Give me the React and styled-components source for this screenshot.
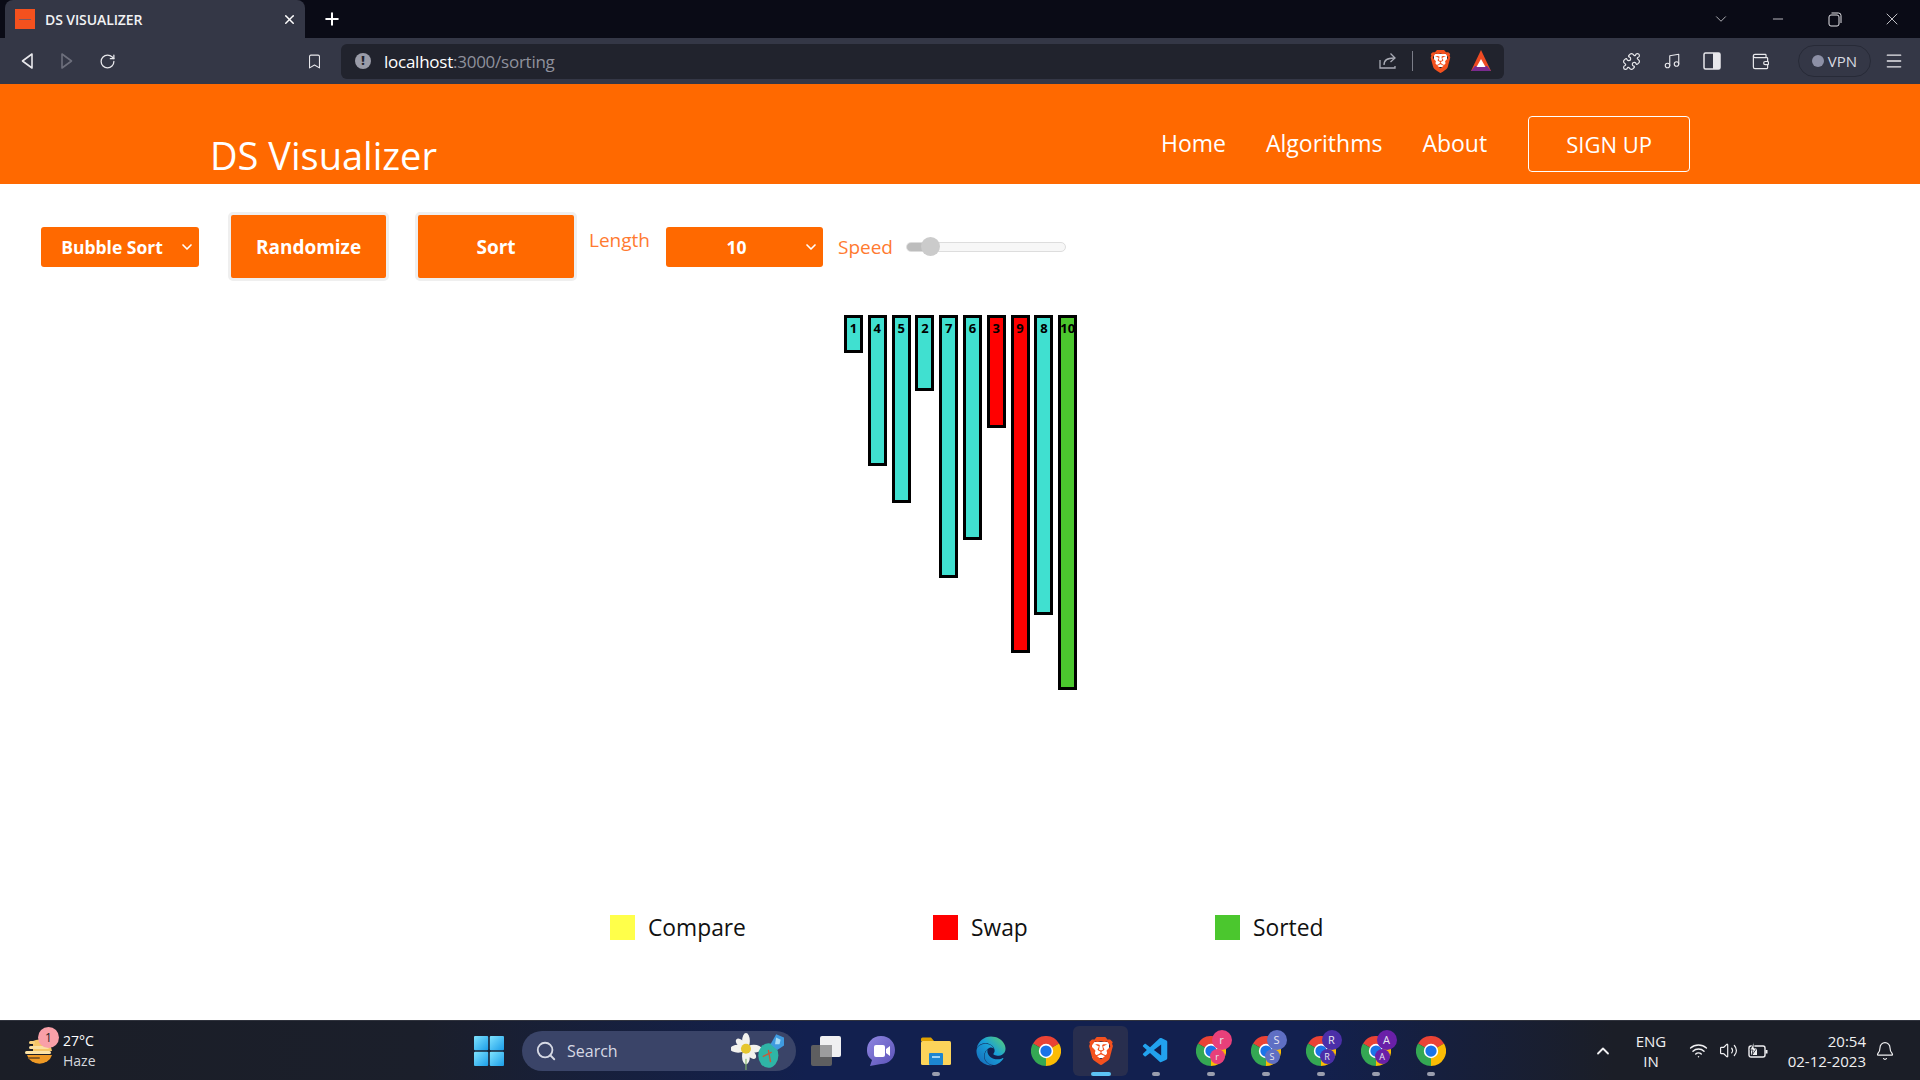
import styled, { createGlobalStyle } from 'styled-components';
import {
  Bell, Bookmark, ChevronDown, ChevronUp, Menu, Minus, Music, Plus,
  Puzzle, RotateCw, Search, Volume2, Wallet, Wifi, X,
} from 'lucide-react';
import { SiBrave } from 'react-icons/si';
import { FaEdge } from 'react-icons/fa';
import { VscVscode } from 'react-icons/vsc';

const ORANGE = '#ff6900';

const GlobalStyle = createGlobalStyle`
  html, body { margin: 0; padding: 0; background: #fff; }
  * { box-sizing: border-box; }
  body { font-family: "Open Sans", "Noto Sans", sans-serif; }
`;

const Screen = styled.div`
  width: 1920px;
  height: 1080px;
  display: flex;
  flex-direction: column;
  overflow: hidden;
`;

/* browser chrome */
const TabStrip = styled.div`
  height: 38px;
  background: #0a0b16;
  display: flex;
  align-items: center;
  color: #fff;
`;

const Tab = styled.div`
  width: 300px;
  height: 38px;
  margin-left: 5px;
  background: #343746;
  border-radius: 8px 8px 0 0;
  display: flex;
  align-items: center;
  padding: 0 8px 0 10px;
`;

const Favicon = styled.div`
  width: 20px;
  height: 20px;
  background: #f4511e;
  display: flex;
  align-items: center;
  justify-content: center;
  &::after {
    content: "";
    width: 12px;
    height: 1px;
    background: #7a5a60;
  }
`;

const TabTitle = styled.span`
  flex: 1;
  margin-left: 10px;
  font-size: 14px;
  font-weight: 600;
  letter-spacing: -0.1px;
  color: #f2f2f4;
`;

const NewTab = styled.div`
  margin-left: 17px;
  display: flex;
`;

const WindowControls = styled.div`
  margin-left: auto;
  display: flex;
  align-items: center;
`;

const WindowButton = styled.div`
  width: 57px;
  display: flex;
  justify-content: center;
  color: #e4e4e8;
`;

const Toolbar = styled.div`
  height: 46px;
  background: #343746;
  display: flex;
  align-items: center;
  color: #e8e8ec;
`;

const NavGlyph = styled.div`
  width: ${p => p.$width || 40}px;
  padding-left: ${p => p.$pad || 0}px;
  margin: 0 ${p => p.$right || 0}px 0 ${p => p.$left || 0}px;
  display: flex;
  justify-content: center;
  color: ${p => p.$dim ? '#6d6f7c' : '#e8e8ec'};
`;

const UrlBar = styled.div`
  width: 1163px;
  height: 35px;
  margin-left: 10px;
  background: #21232d;
  border-radius: 6px;
  display: flex;
  align-items: center;
  padding-left: 14px;
`;

const InfoDot = styled.span`
  width: 16px;
  height: 16px;
  border-radius: 50%;
  background: #9a9ca8;
  color: #21232d;
  font-size: 12px;
  font-weight: 800;
  line-height: 16px;
  text-align: center;
`;

const UrlText = styled.span`
  margin-left: 13px;
  font-size: 17px;
  letter-spacing: -0.25px;
  color: #8f919c;
  b { font-weight: 400; color: #fff; }
`;

const UrlActions = styled.div`
  margin-left: auto;
  display: flex;
  align-items: center;
  color: #a9abb5;
`;

const UrlDivider = styled.span`
  width: 1px;
  height: 20px;
  margin: 0 16px 0 15px;
  background: #7b7d88;
`;

const ToolIcons = styled.div`
  margin-left: 107px;
  display: flex;
  align-items: center;
`;

const VpnPill = styled.div`
  width: 73px;
  height: 32px;
  margin-left: 9px;
  border: 1px solid #272a37;
  border-radius: 16px;
  display: flex;
  align-items: center;
  justify-content: center;
  font-size: 15px;
  color: #d9dae0;
  &::before {
    content: "";
    width: 12px;
    height: 12px;
    margin-right: 4px;
    border-radius: 50%;
    background: #8d90a6;
  }
`;

/* page */
const Page = styled.main`
  flex: 1;
  background: #fff;
  display: flex;
  flex-direction: column;
`;

const NavBar = styled.header`
  height: 100px;
  background: ${ORANGE};
  display: flex;
  color: #fff;
  padding: 32px 0 0 210px;
`;

const Brand = styled.div`
  font-size: 38px;
  line-height: 52px;
  margin-top: 13px;
`;

const NavLink = styled.a`
  font-size: 23px;
  line-height: 36px;
  margin-top: 9px;
  margin-left: ${p => p.$gap}px;
`;

const SignUp = styled.button`
  width: 162px;
  height: 56px;
  margin-left: 41px;
  background: transparent;
  border: 1px solid #fff;
  border-radius: 4px;
  color: #fff;
  font: 400 22px "Open Sans", sans-serif;
`;

const Controls = styled.section`
  display: flex;
  align-items: center;
  height: 69px;
  margin-top: 28px;
  padding-left: 41px;
`;

const SelectWrap = styled.div`
  position: relative;
  width: ${p => p.$width}px;
  height: 40px;
  margin-left: ${p => p.$gap || 0}px;
  color: #fff;
  svg {
    position: absolute;
    right: 4px;
    top: 12px;
  }
`;

const Select = styled.select`
  width: 100%;
  height: 100%;
  appearance: none;
  border: none;
  border-radius: 3px;
  padding: 0 16px 0 0;
  background: ${ORANGE};
  color: #fff;
  font: 700 17.5px "Open Sans", sans-serif;
  text-align: center;
  text-align-last: center;
`;

const ActionButton = styled.button`
  width: ${p => p.$width}px;
  height: 69px;
  margin-left: ${p => p.$gap}px;
  background: ${ORANGE};
  border: 3px solid #efefef;
  border-radius: 5px;
  color: #fff;
  font: 700 19px "Open Sans", sans-serif;
`;

const FieldLabel = styled.label`
  margin-left: ${p => p.$gap}px;
  margin-bottom: ${p => p.$lift}px;
  color: #ff7a30;
  font-size: 19px;
`;

const SpeedRange = styled.input`
  width: 160px;
  height: 10px;
  margin: 0 0 0 13px;
  appearance: none;
  border: 1px solid #ddd;
  border-radius: 5px;
  background: linear-gradient(90deg, #bdbdbd 24px, #f7f7f7 24px);
  &::-webkit-slider-thumb {
    appearance: none;
    width: 19px;
    height: 19px;
    border-radius: 50%;
    background: #cbcbcb;
  }
`;

const Chart = styled.section`
  height: 600px;
  margin-top: 34px;
  padding-left: 844px;
  display: flex;
  align-items: flex-start;
  gap: 4.8px;
`;

const barColors = { idle: '#40e0d0', swap: '#ff0000', sorted: '#4bc72e' };

const Bar = styled.div`
  width: 19px;
  height: ${p => p.$value * 37.4 + 1}px;
  background: ${p => barColors[p.$state]};
  border: 3px solid #000;
  font: 700 13px/20px "Open Sans", sans-serif;
  color: #000;
  display: flex;
  justify-content: center;
  white-space: nowrap;
`;

const Legend = styled.section`
  display: flex;
  padding-left: 610px;
`;

const LegendItem = styled.div`
  width: ${p => p.$width}px;
  display: flex;
  align-items: center;
  height: 25px;
  font-size: 22.8px;
  color: #111;
`;

const Swatch = styled.span`
  width: 25px;
  height: 25px;
  margin-right: 13px;
  background: ${p => p.$color};
`;

/* windows taskbar */
const Taskbar = styled.footer`
  height: 60px;
  border-top: 1px solid #30333d;
  background: linear-gradient(90deg, #1b1e27 0%, #1b1f2b 22%, #12204f 42%, #12204f 68%, #1b1e27 84%);
  display: flex;
  align-items: center;
  color: #fff;
`;

const Weather = styled.div`
  width: 474px;
  padding-left: 24px;
  display: flex;
  align-items: center;
`;

const WeatherIcon = styled.div`
  position: relative;
  display: flex;
  width: 30px;
`;

const CountBadge = styled.span`
  position: absolute;
  left: 14px;
  top: -8px;
  width: 21px;
  height: 21px;
  border-radius: 50%;
  background: #f9a0a8;
  color: #222;
  font-size: 12px;
  line-height: 21px;
  text-align: center;
`;

const WeatherText = styled.div`
  margin-left: 9px;
  font-size: 14px;
  line-height: 20px;
  span { display: block; color: #d4d6dc; }
`;

const SearchPill = styled.div`
  width: 274px;
  height: 40px;
  margin: 0 2px 0 18px;
  border-radius: 20px;
  background: #3a4468;
  display: flex;
  align-items: center;
  padding: 0 6px 0 13px;
  font-size: 16px;
  color: #d6d9e4;
  span { margin-left: 10px; flex: 1; }
`;

const Slot = styled.div`
  position: relative;
  width: 55px;
  height: 50px;
  display: flex;
  align-items: center;
  justify-content: center;
  border-radius: 6px;
  background: ${p => p.$active ? '#282e4e' : 'transparent'};
`;

const RunDot = styled.span`
  position: absolute;
  bottom: 0;
  left: 50%;
  transform: translateX(-50%);
  width: ${p => p.$active ? 20 : 8}px;
  height: 4px;
  border-radius: 2px;
  background: ${p => p.$active ? '#5cc3f5' : '#9a9eae'};
`;

const ChromeWrap = styled.div`
  position: relative;
  width: 30px;
  height: 30px;
`;

const ProfileBadge = styled.span`
  position: absolute;
  left: ${p => p.$big ? 16 : 14}px;
  top: ${p => p.$big ? -6 : 13}px;
  width: ${p => p.$big ? 20 : 15}px;
  height: ${p => p.$big ? 20 : 15}px;
  border-radius: 50%;
  background: ${p => p.$color};
  color: #e8e8f0;
  font-size: ${p => p.$big ? 11 : 9}px;
  line-height: ${p => p.$big ? 20 : 15}px;
  text-align: center;
`;

const BraveMark = styled.div`
  position: relative;
  display: flex;
  color: #f4511e;
  &::before {
    content: "";
    position: absolute;
    inset: 18% 20% 22%;
    background: #fff;
  }
  svg { position: relative; }
`;

const Tray = styled.div`
  margin-left: auto;
  display: flex;
  align-items: center;
  color: #f0f0f2;
`;

const TrayIcon = styled.div`
  width: 30px;
  margin: 0 ${p => p.$right || 0}px 0 ${p => p.$left || 0}px;
  display: flex;
  justify-content: center;
`;

const TrayText = styled.div`
  font-size: 15px;
  line-height: 20px;
  text-align: ${p => p.$align};
  width: ${p => p.$width}px;
  margin-left: ${p => p.$gap}px;
`;

function BackIcon({ flip }) {
  return (
    <svg width="14" height="18" viewBox="0 0 14 18" fill="none" stroke="currentColor" strokeWidth="1.6" transform={flip ? 'scale(-1 1)' : undefined}>
      <path d="M12 2 L2.5 9 L12 16 Z" strokeLinejoin="round" />
    </svg>
  );
}

function RestoreIcon() {
  return (
    <svg width="14" height="15" viewBox="0 0 14 15" fill="none" stroke="currentColor" strokeWidth="1">
      <rect x="1" y="3" width="10" height="11" rx="2" />
      <path d="M3.5 1 H10.5 A2.5 2.5 0 0 1 13 3.5 V11" />
    </svg>
  );
}

function ShareIcon() {
  return (
    <svg width="18" height="18" viewBox="0 0 18 18" fill="none" stroke="currentColor" strokeWidth="1.3">
      <path d="M1 8 V16 H16 V14" />
      <path d="M5 13 C5 8 8 6 15 6" />
      <path d="M11.5 1.5 L16 6 L11.5 10" />
    </svg>
  );
}

function BatTriangle() {
  return (
    <svg width="22" height="24" viewBox="0 0 22 24">
      <path d="M11 1 L21 22 H1 Z" fill="#ef4b23" />
      <path d="M1 22 L5 17 H17 L21 22 Z" fill="#7a2b8f" />
      <path d="M11 10 L15.5 18 H6.5 Z" fill="#fff" />
    </svg>
  );
}

function SidebarIcon() {
  return (
    <svg width="18" height="18" viewBox="0 0 18 18">
      <rect x="1" y="1" width="16" height="16" rx="1.5" fill="none" stroke="#e8e8ec" strokeWidth="1.5" />
      <rect x="10" y="1" width="7" height="16" fill="#e8e8ec" />
    </svg>
  );
}

function BatteryIcon() {
  return (
    <svg width="20" height="18" viewBox="0 0 20 18">
      <rect x="1" y="4" width="16" height="11" rx="2" fill="none" stroke="#f0f0f2" strokeWidth="1.4" />
      <rect x="3" y="6" width="6" height="7" fill="#f0f0f2" />
      <rect x="17.5" y="8" width="2" height="3.5" fill="#f0f0f2" />
      <path d="M6 0 L2 8 H5 L4 13 L9 6 H6 Z" fill="#f0f0f2" stroke="#1b1e27" strokeWidth="0.8" />
    </svg>
  );
}

function SunHaze() {
  return (
    <svg width="30" height="32" viewBox="0 0 30 32">
      <path d="M3 20 H28 A13 12 0 0 1 3 20 Z" fill="#ef9a25" />
      <path d="M9 6 A13 13 0 0 1 28 16 H9 Z" fill="#f6c667" />
      <rect x="5" y="6" width="6" height="3" rx="1.5" fill="#f8d27e" />
      <rect x="5" y="11" width="20" height="3" rx="1.5" fill="#fbe0a0" />
      <rect x="1" y="16" width="26" height="3" rx="1.5" fill="#fde3a5" />
      <rect x="4" y="22" width="12" height="2" rx="1" fill="#8a5a20" />
    </svg>
  );
}

function WinLogo() {
  return (
    <svg width="30" height="30" viewBox="0 0 30 30">
      <defs>
        <linearGradient id="winGrad" x1="0" y1="0" x2="1" y2="1">
          <stop offset="0" stopColor="#7fe3ff" />
          <stop offset="1" stopColor="#1b9de8" />
        </linearGradient>
      </defs>
      <rect x="0" y="0" width="14.2" height="14.2" rx="1" fill="url(#winGrad)" />
      <rect x="15.8" y="0" width="14.2" height="14.2" rx="1" fill="url(#winGrad)" />
      <rect x="0" y="15.8" width="14.2" height="14.2" rx="1" fill="url(#winGrad)" />
      <rect x="15.8" y="15.8" width="14.2" height="14.2" rx="1" fill="url(#winGrad)" />
    </svg>
  );
}

function SearchArt() {
  return (
    <svg width="59" height="38" viewBox="0 0 52 34">
      <g fill="#f2f2ee">
        <ellipse cx="13" cy="8" rx="3.5" ry="7" />
        <ellipse cx="13" cy="22" rx="3.5" ry="7" />
        <ellipse cx="6" cy="15" rx="7" ry="3.5" />
        <ellipse cx="20" cy="15" rx="7" ry="3.5" />
        <ellipse cx="8" cy="10" rx="5" ry="3" transform="rotate(45 8 10)" />
        <ellipse cx="18" cy="20" rx="5" ry="3" transform="rotate(45 18 20)" />
      </g>
      <circle cx="13" cy="15" r="4.5" fill="#e6c62e" />
      <rect x="12.5" y="24" width="1" height="10" fill="#7fb56a" />
      <ellipse cx="33" cy="21" rx="9" ry="11" fill="#2fb5a6" />
      <path d="M28 22 L36 18 M33 16 L35 27" stroke="#c95a3a" strokeWidth="1.2" />
      <path d="M40 2 L47 5 L47 12 L41 16 L35 11 Z" fill="#3f9be0" />
      <path d="M40 5 L44 7 L43 11 L39 11 Z" fill="#a7dcf6" />
    </svg>
  );
}

function TaskViewIcon() {
  return (
    <svg width="32" height="32" viewBox="0 0 32 32">
      <rect x="1" y="10" width="21" height="21" rx="2" fill="#5e5e60" />
      <rect x="10" y="1" width="21" height="21" rx="2" fill="#f0f0f2" />
      <rect x="10" y="10" width="12" height="12" fill="#9c9c9e" />
    </svg>
  );
}

function MeetIcon() {
  return (
    <svg width="30" height="32" viewBox="0 0 30 32">
      <defs>
        <linearGradient id="meetGrad" x1="0" y1="0" x2="1" y2="1">
          <stop offset="0" stopColor="#8f86e0" />
          <stop offset="1" stopColor="#5a52b8" />
        </linearGradient>
      </defs>
      <path d="M15 1 C24 1 29 8 29 15 C29 23 23 29 15 29 L4 31 L6 25 C2 22 1 19 1 15 C1 8 6 1 15 1 Z" fill="url(#meetGrad)" />
      <rect x="8" y="10" width="11" height="12" rx="2" fill="#fff" />
      <path d="M20 14 L24 11 V21 L20 18 Z" fill="#fff" />
    </svg>
  );
}

function FolderIcon() {
  return (
    <svg width="30" height="30" viewBox="0 0 30 30">
      <path d="M0 3 A1.5 1.5 0 0 1 1.5 1.5 H10 L13 5 H0 Z" fill="#e0a100" />
      <rect x="0" y="5" width="30" height="24" rx="1.5" fill="#fcd45a" />
      <rect x="8" y="17" width="14" height="12" rx="1" fill="#1d86d0" />
      <rect x="11" y="20" width="8" height="2" fill="#9ed4f5" />
    </svg>
  );
}

const GradientDefs = styled.svg`
  position: absolute;
  width: 0;
  height: 0;
`;

function EdgeIcon() {
  return (
    <>
      <GradientDefs>
        <defs>
          <linearGradient id="edgeGrad" x1="0" y1="1" x2="1" y2="0">
            <stop offset="0" stopColor="#1565b8" />
            <stop offset="0.55" stopColor="#19a0d8" />
            <stop offset="1" stopColor="#5fd36a" />
          </linearGradient>
        </defs>
      </GradientDefs>
      <FaEdge size={30} fill="url(#edgeGrad)" />
    </>
  );
}

function ChromeIcon({ size = 30 }) {
  return (
    <svg width={size} height={size} viewBox="0 0 48 48">
      <path d="M24 24 L3.2 12 A24 24 0 0 1 44.8 12 Z" fill="#ea4335" />
      <path d="M24 24 L44.8 12 A24 24 0 0 1 24 48 Z" fill="#fbbc04" />
      <path d="M24 24 L24 48 A24 24 0 0 1 3.2 12 Z" fill="#34a853" />
      <circle cx="24" cy="24" r="11.5" fill="#fff" />
      <circle cx="24" cy="24" r="9" fill="#1a73e8" />
    </svg>
  );
}

const profiles = [
  { letter: 'r', color: '#e8407a' },
  { letter: 'S', color: '#5f6fc4' },
  { letter: 'R', color: '#4b2fa8' },
  { letter: 'A', color: '#6a20a8' },
];

const bars = [
  { value: 1, state: 'idle' },
  { value: 4, state: 'idle' },
  { value: 5, state: 'idle' },
  { value: 2, state: 'idle' },
  { value: 7, state: 'idle' },
  { value: 6, state: 'idle' },
  { value: 3, state: 'swap' },
  { value: 9, state: 'swap' },
  { value: 8, state: 'idle' },
  { value: 10, state: 'sorted' },
];

export default function App() {
  return (
    <Screen>
      <GlobalStyle />
      <TabStrip>
        <Tab>
          <Favicon />
          <TabTitle>DS VISUALIZER</TabTitle>
          <X size={15} strokeWidth={2.4} />
        </Tab>
        <NewTab><Plus size={20} strokeWidth={2.4} /></NewTab>
        <WindowControls>
          <WindowButton><ChevronDown size={18} strokeWidth={1} /></WindowButton>
          <WindowButton><Minus size={16} strokeWidth={1.2} /></WindowButton>
          <WindowButton><RestoreIcon /></WindowButton>
          <WindowButton><X size={20} strokeWidth={1} /></WindowButton>
        </WindowControls>
      </TabStrip>

      <Toolbar>
        <NavGlyph $width={54}><BackIcon /></NavGlyph>
        <NavGlyph $width={26} $dim><BackIcon flip /></NavGlyph>
        <NavGlyph $width={54}><RotateCw size={17} strokeWidth={1.8} /></NavGlyph>
        <NavGlyph $width={197} $pad={163}><Bookmark size={17} strokeWidth={1.5} /></NavGlyph>
        <UrlBar>
          <InfoDot>!</InfoDot>
          <UrlText><b>localhost</b>:3000/sorting</UrlText>
          <UrlActions>
            <ShareIcon />
            <UrlDivider />
            <BraveMark><SiBrave size={23} /></BraveMark>
            <NavGlyph $width={42} $left={8} $right={2}><BatTriangle /></NavGlyph>
          </UrlActions>
        </UrlBar>
        <ToolIcons>
          <NavGlyph $width={40}><Puzzle size={19} strokeWidth={1.5} /></NavGlyph>
          <NavGlyph $width={42}><Music size={18} strokeWidth={1.5} /></NavGlyph>
          <NavGlyph $width={38}><SidebarIcon /></NavGlyph>
          <NavGlyph $width={58}><Wallet size={19} strokeWidth={1.5} /></NavGlyph>
          <VpnPill>VPN</VpnPill>
          <NavGlyph $width={46}><Menu size={20} strokeWidth={1.6} /></NavGlyph>
        </ToolIcons>
      </Toolbar>

      <Page>
        <NavBar>
          <Brand>DS Visualizer</Brand>
          <NavLink $gap={724}>Home</NavLink>
          <NavLink $gap={40}>Algorithms</NavLink>
          <NavLink $gap={40}>About</NavLink>
          <SignUp>SIGN UP</SignUp>
        </NavBar>

        <Controls>
          <SelectWrap $width={158}>
            <Select defaultValue="Bubble Sort">
              <option>Bubble Sort</option>
              <option>Selection Sort</option>
              <option>Insertion Sort</option>
            </Select>
            <ChevronDown size={16} strokeWidth={2.5} />
          </SelectWrap>
          <ActionButton $width={161} $gap={29}>Randomize</ActionButton>
          <ActionButton $width={162} $gap={26}>Sort</ActionButton>
          <FieldLabel $gap={12} $lift={14}>Length</FieldLabel>
          <SelectWrap $width={157} $gap={16}>
            <Select defaultValue="10">
              <option>10</option>
              <option>20</option>
              <option>30</option>
            </Select>
            <ChevronDown size={16} strokeWidth={2.5} />
          </SelectWrap>
          <FieldLabel $gap={15} $lift={0}>Speed</FieldLabel>
          <SpeedRange type="range" min="0" max="100" defaultValue="10" />
        </Controls>

        <Chart>
          {bars.map(bar => (
            <Bar key={bar.value} $value={bar.value} $state={bar.state}>{bar.value}</Bar>
          ))}
        </Chart>

        <Legend>
          <LegendItem $width={323}><Swatch $color="#ffff4a" />Compare</LegendItem>
          <LegendItem $width={282}><Swatch $color="#ff0000" />Swap</LegendItem>
          <LegendItem $width={200}><Swatch $color="#4bc72e" />Sorted</LegendItem>
        </Legend>
      </Page>

      <Taskbar>
        <Weather>
          <WeatherIcon>
            <SunHaze />
            <CountBadge>1</CountBadge>
          </WeatherIcon>
          <WeatherText>27°C<span>Haze</span></WeatherText>
        </Weather>
        <WinLogo />
        <SearchPill>
          <Search size={22} strokeWidth={2} />
          <span>Search</span>
          <SearchArt />
        </SearchPill>
        <Slot><TaskViewIcon /></Slot>
        <Slot><MeetIcon /></Slot>
        <Slot><FolderIcon /><RunDot /></Slot>
        <Slot><EdgeIcon /></Slot>
        <Slot><ChromeIcon /></Slot>
        <Slot $active><BraveMark><SiBrave size={28} /></BraveMark><RunDot $active /></Slot>
        <Slot><VscVscode size={30} color="#22a2ee" /><RunDot /></Slot>
        {profiles.map(profile => (
          <Slot key={profile.letter}>
            <ChromeWrap>
              <ChromeIcon />
              <ProfileBadge $big $color={profile.color}>{profile.letter}</ProfileBadge>
              <ProfileBadge $color={profile.color}>{profile.letter}</ProfileBadge>
            </ChromeWrap>
            <RunDot />
          </Slot>
        ))}
        <Slot><ChromeIcon /><RunDot /></Slot>
        <Tray>
          <TrayIcon><ChevronUp size={20} strokeWidth={2.2} /></TrayIcon>
          <TrayText $align="center" $width={40} $gap={13}>ENG<br />IN</TrayText>
          <TrayIcon $left={12}><Wifi size={19} strokeWidth={1.8} /></TrayIcon>
          <TrayIcon><Volume2 size={19} strokeWidth={1.5} /></TrayIcon>
          <TrayIcon><BatteryIcon /></TrayIcon>
          <TrayText $align="right" $width={90} $gap={3}>20:54<br />02-12-2023</TrayText>
          <TrayIcon $left={4} $right={20}><Bell size={20} strokeWidth={1.4} /></TrayIcon>
        </Tray>
      </Taskbar>
    </Screen>
  );
}
